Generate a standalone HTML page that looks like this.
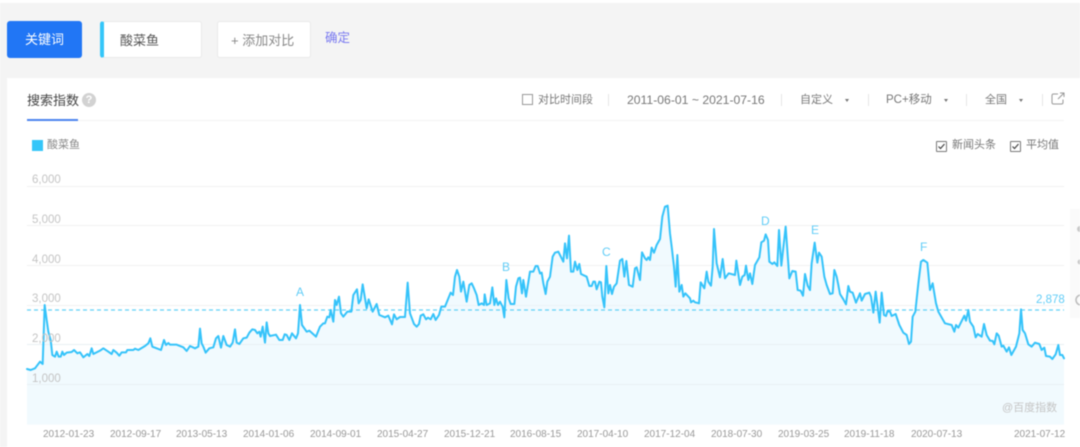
<!DOCTYPE html>
<html lang="zh"><head><meta charset="utf-8"><title>搜索指数</title>
<style>
html,body{margin:0;padding:0;background:#fff}
#p{position:relative;width:1080px;height:447px;overflow:hidden;background:#f4f4f4;font-family:"Liberation Sans","Noto Sans CJK SC",sans-serif;color:#666;filter:blur(.4px)}
.a{position:absolute;white-space:nowrap;line-height:1}
.box{position:absolute;background:#fff;border:1px solid #e9e9e9;border-radius:3px;box-sizing:border-box}
.sep{position:absolute;top:94px;width:1px;height:12px;background:#e6e6e6}
.tri{position:absolute;top:99px;width:0;height:0;border-left:2px solid transparent;border-right:2px solid transparent;border-top:3px solid #777}
.x{font-size:10px;color:#999;top:430px}
.y{font-size:11.5px;color:#c4c4c4;left:32px}
.m{font-size:12px;color:#62cdf7}
.cb{position:absolute;width:11px;height:11px;box-sizing:border-box;border:1px solid #777;border-radius:1px;background:#fff}
svg{position:absolute;left:0;top:0}
</style></head><body><div id="p">
<div class="a" style="left:0;top:0;width:1080px;height:3px;background:#fff"></div>

<div class="a" style="left:7px;top:21px;width:75px;height:37px;background:#2176f5;border-radius:3px"></div>
<div class="a" style="left:25px;top:33px;font-size:13px;color:#fff">关键词</div>
<div class="box" style="left:100px;top:21px;width:102px;height:37px;border-left:4px solid #35c6f9"></div>
<div class="a" style="left:120px;top:34px;font-size:13px;color:#555">酸菜鱼</div>
<div class="box" style="left:217px;top:21px;width:94px;height:37px"></div>
<div class="a" style="left:231px;top:34px;font-size:13px;color:#888">+ 添加对比</div>
<div class="a" style="left:325px;top:32px;font-size:12.500px;color:#7a7af0">确定</div>

<div class="a" style="left:7px;top:78px;width:1073px;height:369px;background:#fff"></div>
<div class="a" style="left:27px;top:94px;font-size:13px;color:#444">搜索指数</div>
<div class="a" style="left:82px;top:93px;width:14px;height:14px;border-radius:50%;background:#d2d2d2;color:#fff;font-size:11px;line-height:14px;text-align:center;font-weight:bold">?</div>
<div class="a" style="left:27px;top:120px;width:1037px;height:1px;background:#f3f3f3"></div>
<div class="a" style="left:27px;top:119px;width:51px;height:2px;background:#4d84ee"></div>

<div class="a" style="left:522px;top:94px;width:11px;height:11px;border:1px solid #999;box-sizing:border-box"></div>
<div class="a" style="left:538px;top:95px;font-size:11px;color:#777">对比时间段</div>
<div class="sep" style="left:608px"></div>
<div class="a" style="left:627px;top:94px;font-size:12.200px;color:#777">2011-06-01 ~ 2021-07-16</div>
<div class="sep" style="left:781px"></div>
<div class="a" style="left:800px;top:95px;font-size:11px;color:#777">自定义</div>
<div class="tri" style="left:845px"></div>
<div class="sep" style="left:868px"></div>
<div class="a" style="left:886px;top:95px;font-size:11.500px;color:#777">PC+移动</div>
<div class="tri" style="left:944px"></div>
<div class="sep" style="left:966px"></div>
<div class="a" style="left:985px;top:95px;font-size:11px;color:#777">全国</div>
<div class="tri" style="left:1019px"></div>
<div class="sep" style="left:1042px"></div>
<svg width="1080" height="447" style="z-index:1;pointer-events:none"><path d="M1058 94h-4.500a1.500 1.500 0 0 0-1.500 1.500v7a1.500 1.500 0 0 0 1.500 1.500h8a1.500 1.500 0 0 0 1.500-1.500v-3M1058 99l6-6M1060 93h4v4" fill="none" stroke="#999" stroke-width="1"/></svg>

<div class="a" style="left:32px;top:140px;width:11px;height:11px;background:#35c6f9"></div>
<div class="a" style="left:47px;top:140px;font-size:11px;color:#888">酸菜鱼</div>

<div class="cb" style="left:936px;top:141px"></div>
<div class="a" style="left:952px;top:140px;font-size:11px;color:#777">新闻头条</div>
<div class="cb" style="left:1010px;top:141px"></div>
<div class="a" style="left:1026px;top:140px;font-size:11px;color:#777">平均值</div>

<div class="a" style="left:1070px;top:209px;width:10px;height:109px;background:#fafafa"></div>

<svg width="1080" height="447">
<g fill="none" stroke="#f1f1f1" stroke-width="1">
<path d="M27 186.500H1064M27 225.500H1064M27 265.500H1064M27 305.500H1064M27 344.500H1064M27 384.500H1064"/>
</g>
<g fill="#e8f6fd" fill-opacity=".6" stroke="none">
<polygon transform="translate(0,170) scale(.33333)" points="81,764 81,597 92,600 105,595 120,575 128,582 134,405 140,450 145,485 152,510 157,555 165,560 170,545 176,560 182,560 187,545 192,555 200,548 215,546 222,540 232,550 240,547 250,562 262,552 268,558 275,535 280,552 300,542 310,535 325,545 335,552 340,540 350,548 358,557 365,547 378,547 382,540 400,540 405,536 415,540 435,528 445,520 451,505 457,530 470,535 483,540 492,510 498,525 505,519 510,524 530,524 550,532 560,543 570,528 585,535 595,530 600,476 605,520 610,530 617,548 628,535 640,532 648,505 655,498 663,533 670,498 680,525 690,530 698,518 705,478 710,518 718,522 730,505 740,503 748,488 757,478 765,480 772,490 778,485 782,500 788,470 795,518 800,457 805,490 810,498 810,764"/>
<polygon transform="translate(270,170) scale(.33333)" points="0,764 0,498 18,494 28,510 38,510 44,493 50,495 58,510 66,490 78,505 84,490 90,405 96,465 110,485 118,482 138,500 150,470 160,460 165,460 172,440 178,442 182,420 190,455 195,390 200,405 207,380 213,430 220,440 232,425 244,425 250,375 261,358 266,400 272,390 278,343 290,415 296,388 308,425 320,402 328,435 345,442 355,437 366,463 372,433 380,448 390,441 405,441 413,338 420,430 432,462 440,470 447,462 452,437 460,433 468,448 474,443 482,448 490,432 497,450 507,435 514,410 525,410 535,385 542,368 549,375 555,320 561,300 568,320 573,365 580,335 590,395 598,345 605,340 612,355 620,375 626,405 635,400 642,405 644,373 650,405 660,400 667,352 673,405 678,385 684,405 690,395 698,410 703,442 709,330 716,385 722,402 733,402 738,350 745,325 750,323 756,370 760,330 768,380 780,305 790,305 797,288 803,288 810,310 810,764"/>
<polygon transform="translate(540,170) scale(.33333)" points="0,764 0,310 5,308 10,340 17,372 22,335 30,320 38,260 45,248 55,245 70,275 75,220 81,265 87,197 93,305 100,305 105,275 112,300 118,282 123,312 140,320 148,348 155,348 160,335 165,335 170,358 178,335 183,337 187,380 193,412 199,288 205,370 210,345 216,372 222,350 230,340 240,272 247,267 253,320 259,273 267,345 278,350 285,295 290,292 300,330 306,247 315,265 320,270 325,262 330,270 335,233 342,248 350,225 360,207 367,140 375,110 383,107 390,190 395,230 402,290 407,350 412,255 418,365 425,345 430,380 436,370 450,385 453,397 460,392 465,397 477,400 482,337 493,355 500,305 505,335 513,347 518,290 522,177 530,280 540,322 548,267 555,325 566,310 585,315 589,272 600,345 607,320 614,315 618,287 625,330 630,310 637,342 645,285 658,262 664,217 672,212 677,193 684,210 688,275 697,282 703,277 712,288 717,180 724,287 737,170 748,325 757,303 767,305 773,360 782,362 789,377 795,312 803,347 810,360 810,764"/>
<polygon transform="translate(810,170) scale(.33333)" points="0,764 0,360 5,280 14,218 22,278 27,248 35,260 43,320 50,345 60,372 68,370 73,300 80,320 85,345 90,372 100,388 108,403 115,348 120,365 128,368 138,398 150,370 155,392 165,372 178,368 183,380 190,428 197,365 209,458 215,368 222,435 228,438 233,422 240,425 245,438 257,432 268,465 280,488 290,495 297,522 303,515 308,440 316,425 325,340 333,275 340,270 352,278 360,360 368,340 378,400 385,425 405,460 425,465 433,485 438,465 445,473 463,437 468,452 475,420 480,455 490,470 497,502 503,492 515,500 522,462 530,495 540,512 548,513 553,523 560,490 566,497 575,530 580,527 590,545 597,532 604,555 618,530 628,490 633,418 638,480 645,490 655,523 665,530 675,518 688,522 695,540 703,533 708,558 720,560 727,567 737,553 745,525 750,555 757,555 762,565 762,764"/>
</g>
<path d="M27 344.500H1064M27 384.500H1064" stroke="#e9eff3" stroke-width="1" fill="none"/>
<path d="M27 310H1064" stroke="#62d2f8" stroke-width="1.300" stroke-dasharray="4 3" fill="none"/>
<g fill="none" stroke="#35c3fa" stroke-width="6" stroke-linejoin="round" stroke-linecap="round">
<polyline transform="translate(0,170) scale(.33333)" points="81,597 92,600 105,595 120,575 128,582 134,405 140,450 145,485 152,510 157,555 165,560 170,545 176,560 182,560 187,545 192,555 200,548 215,546 222,540 232,550 240,547 250,562 262,552 268,558 275,535 280,552 300,542 310,535 325,545 335,552 340,540 350,548 358,557 365,547 378,547 382,540 400,540 405,536 415,540 435,528 445,520 451,505 457,530 470,535 483,540 492,510 498,525 505,519 510,524 530,524 550,532 560,543 570,528 585,535 595,530 600,476 605,520 610,530 617,548 628,535 640,532 648,505 655,498 663,533 670,498 680,525 690,530 698,518 705,478 710,518 718,522 730,505 740,503 748,488 757,478 765,480 772,490 778,485 782,500 788,470 795,518 800,457 805,490 810,498"/>
<polyline transform="translate(270,170) scale(.33333)" points="0,498 18,494 28,510 38,510 44,493 50,495 58,510 66,490 78,505 84,490 90,405 96,465 110,485 118,482 138,500 150,470 160,460 165,460 172,440 178,442 182,420 190,455 195,390 200,405 207,380 213,430 220,440 232,425 244,425 250,375 261,358 266,400 272,390 278,343 290,415 296,388 308,425 320,402 328,435 345,442 355,437 366,463 372,433 380,448 390,441 405,441 413,338 420,430 432,462 440,470 447,462 452,437 460,433 468,448 474,443 482,448 490,432 497,450 507,435 514,410 525,410 535,385 542,368 549,375 555,320 561,300 568,320 573,365 580,335 590,395 598,345 605,340 612,355 620,375 626,405 635,400 642,405 644,373 650,405 660,400 667,352 673,405 678,385 684,405 690,395 698,410 703,442 709,330 716,385 722,402 733,402 738,350 745,325 750,323 756,370 760,330 768,380 780,305 790,305 797,288 803,288 810,310"/>
<polyline transform="translate(540,170) scale(.33333)" points="0,310 5,308 10,340 17,372 22,335 30,320 38,260 45,248 55,245 70,275 75,220 81,265 87,197 93,305 100,305 105,275 112,300 118,282 123,312 140,320 148,348 155,348 160,335 165,335 170,358 178,335 183,337 187,380 193,412 199,288 205,370 210,345 216,372 222,350 230,340 240,272 247,267 253,320 259,273 267,345 278,350 285,295 290,292 300,330 306,247 315,265 320,270 325,262 330,270 335,233 342,248 350,225 360,207 367,140 375,110 383,107 390,190 395,230 402,290 407,350 412,255 418,365 425,345 430,380 436,370 450,385 453,397 460,392 465,397 477,400 482,337 493,355 500,305 505,335 513,347 518,290 522,177 530,280 540,322 548,267 555,325 566,310 585,315 589,272 600,345 607,320 614,315 618,287 625,330 630,310 637,342 645,285 658,262 664,217 672,212 677,193 684,210 688,275 697,282 703,277 712,288 717,180 724,287 737,170 748,325 757,303 767,305 773,360 782,362 789,377 795,312 803,347 810,360"/>
<polyline transform="translate(810,170) scale(.33333)" points="0,360 5,280 14,218 22,278 27,248 35,260 43,320 50,345 60,372 68,370 73,300 80,320 85,345 90,372 100,388 108,403 115,348 120,365 128,368 138,398 150,370 155,392 165,372 178,368 183,380 190,428 197,365 209,458 215,368 222,435 228,438 233,422 240,425 245,438 257,432 268,465 280,488 290,495 297,522 303,515 308,440 316,425 325,340 333,275 340,270 352,278 360,360 368,340 378,400 385,425 405,460 425,465 433,485 438,465 445,473 463,437 468,452 475,420 480,455 490,470 497,502 503,492 515,500 522,462 530,495 540,512 548,513 553,523 560,490 566,497 575,530 580,527 590,545 597,532 604,555 618,530 628,490 633,418 638,480 645,490 655,523 665,530 675,518 688,522 695,540 703,533 708,558 720,560 727,567 737,553 745,525 750,555 757,555 762,565"/>
</g>
<path d="M938.500 146.500l2 2 4-4.500M1012.500 146.500l2 2 4-4.500" fill="none" stroke="#444" stroke-width="1.200"/>
<g fill="#c9c9c9"><circle cx="1080" cy="229" r="3"/><circle cx="1080" cy="262" r="2.500"/></g>
<circle cx="1081" cy="300" r="5" fill="none" stroke="#bbb" stroke-width="1.500"/>
</svg>

<div class="a y" style="top:175px">6,000</div>
<div class="a y" style="top:215px">5,000</div>
<div class="a y" style="top:255px">4,000</div>
<div class="a y" style="top:294px">3,000</div>
<div class="a y" style="top:334px">2,000</div>
<div class="a y" style="top:374px">1,000</div>

<div class="a m" style="left:296px;top:286px">A</div>
<div class="a m" style="left:502px;top:261px">B</div>
<div class="a m" style="left:602px;top:246px">C</div>
<div class="a m" style="left:761px;top:215px">D</div>
<div class="a m" style="left:811px;top:224px">E</div>
<div class="a m" style="left:920px;top:241px">F</div>
<div class="a" style="left:1036px;top:295px;font-size:11.500px;color:#62cdf7">2,878</div>
<div class="a" style="left:1002px;top:403px;font-size:11px;color:#c4c4c4">@百度指数</div>

<div class="a x" style="left:43px">2012-01-23</div>
<div class="a x" style="left:110px">2012-09-17</div>
<div class="a x" style="left:176px">2013-05-13</div>
<div class="a x" style="left:243px">2014-01-06</div>
<div class="a x" style="left:310px">2014-09-01</div>
<div class="a x" style="left:377px">2015-04-27</div>
<div class="a x" style="left:444px">2015-12-21</div>
<div class="a x" style="left:510px">2016-08-15</div>
<div class="a x" style="left:577px">2017-04-10</div>
<div class="a x" style="left:644px">2017-12-04</div>
<div class="a x" style="left:711px">2018-07-30</div>
<div class="a x" style="left:778px">2019-03-25</div>
<div class="a x" style="left:844px">2019-11-18</div>
<div class="a x" style="left:911px">2020-07-13</div>
<div class="a x" style="left:1014px">2021-07-12</div>
</div></body></html>
